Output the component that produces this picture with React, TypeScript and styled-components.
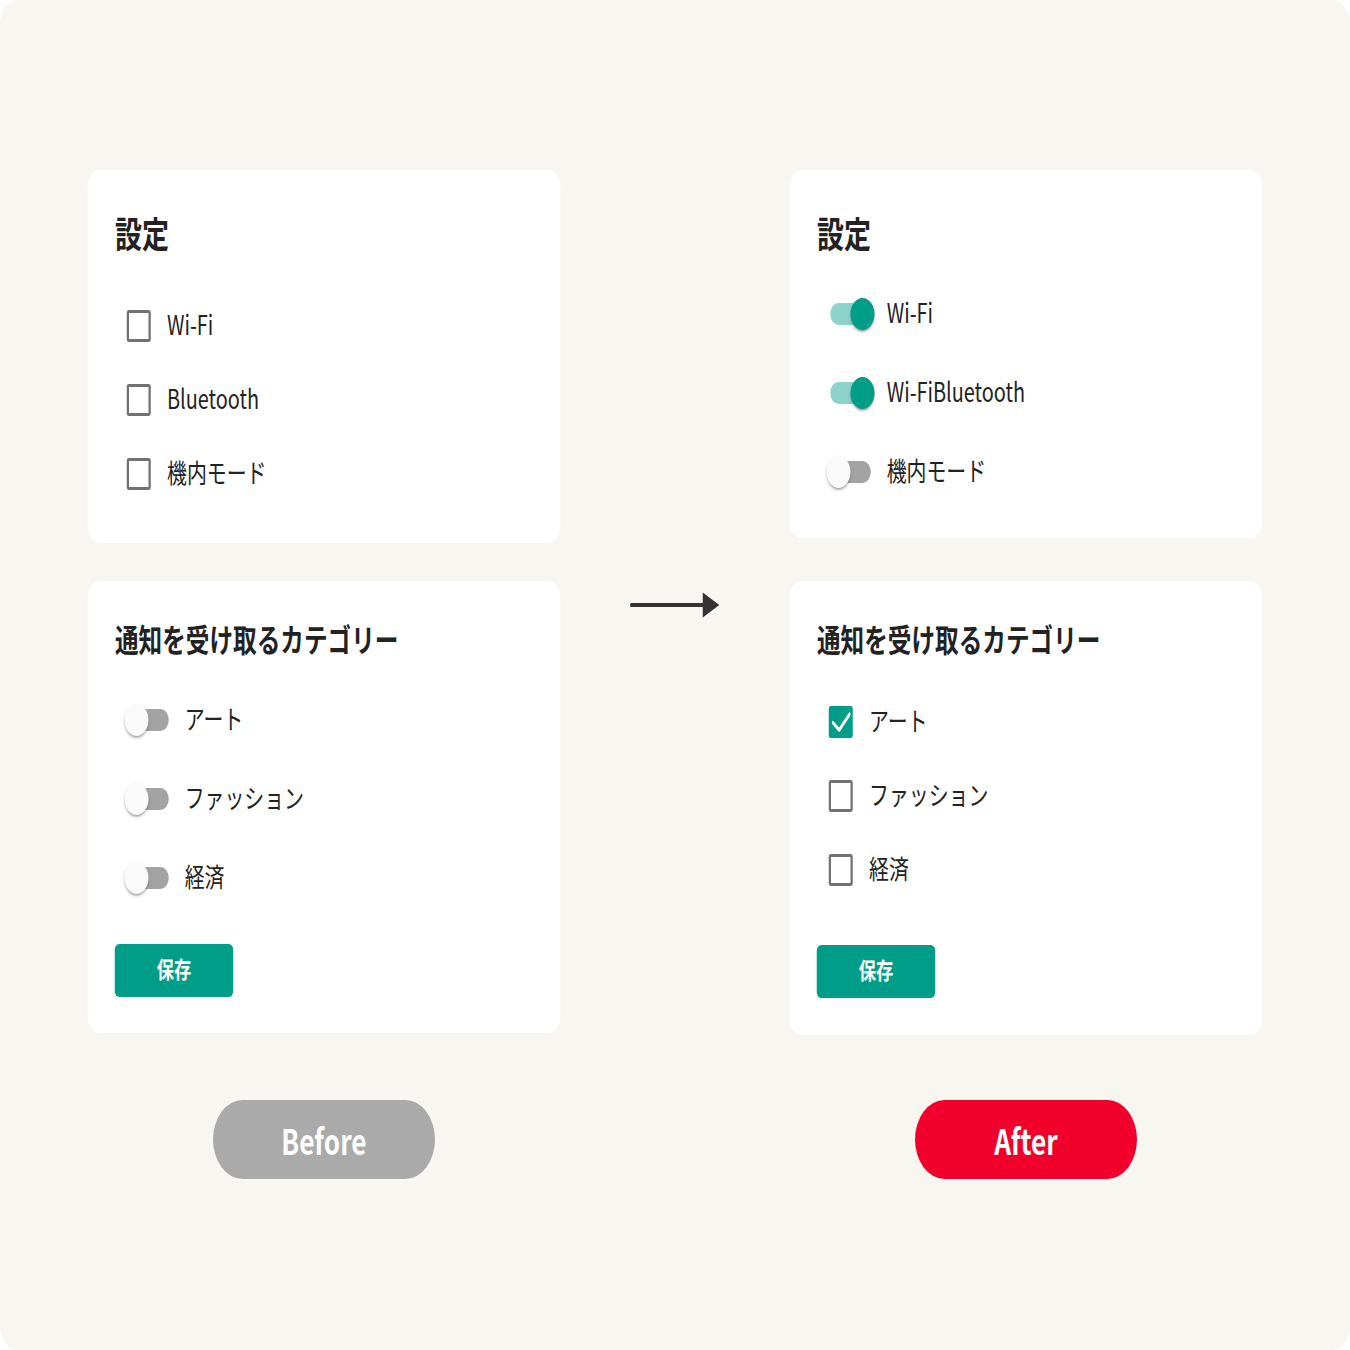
import React from "react";
import styled, { createGlobalStyle } from "styled-components";

const TEAL = "#009e88";

const GlobalStyle = createGlobalStyle`
  html, body {
    margin: 0;
    padding: 0;
    background: #ffffff;
    overflow: hidden;
  }
  body {
    font-family: "Noto Sans CJK JP", "Noto Sans", sans-serif;
    color: #222222;
  }
`;

// the shot is squeezed to 3/4 of its width, so lay out at 1800 wide and scale down
const Stage = styled.div`
  width: 1800px;
  height: 1350px;
  box-sizing: border-box;
  padding: 170px 0 0 117.3px;
  background: #f7f6f1;
  border-radius: 24px;
  transform: scaleX(0.75);
  transform-origin: 0 0;
`;

const Compare = styled.div`
  display: grid;
  grid-template-columns: 629.3px 306.7px 629.3px;
  row-gap: 65px;
`;

const Stack = styled.div<{ $gap: number }>`
  display: flex;
  flex-direction: column;
  gap: ${(p) => p.$gap}px;
`;

const Card = styled.section<{ $top: number; $bottom: number }>`
  background: #ffffff;
  border-radius: 16px;
  padding: ${(p) => p.$top}px 36px ${(p) => p.$bottom}px;
`;

const Heading = styled.h2<{ $size: number }>`
  margin: 0;
  font-size: ${(p) => p.$size}px;
  line-height: ${(p) => p.$size * 1.5}px;
  font-weight: 700;
  color: #222222;
`;

const List = styled.div<{ $top: number }>`
  display: flex;
  flex-direction: column;
  margin-top: ${(p) => p.$top}px;
`;

const Row = styled.label<{ $height: number }>`
  display: flex;
  align-items: center;
  height: ${(p) => p.$height}px;
`;

const Label = styled.span`
  padding-bottom: 4px;
  font-size: 26.5px;
  line-height: 1;
  color: #222222;
  white-space: nowrap;
`;

const Box = styled.span<{ $checked: boolean }>`
  display: flex;
  align-items: center;
  justify-content: center;
  box-sizing: border-box;
  width: 32px;
  height: 32px;
  margin: 0 21.4px 0 16px;
  flex-shrink: 0;
  border: 3.5px solid ${(p) => (p.$checked ? TEAL : "#727272")};
  border-radius: 3px;
  background: ${(p) => (p.$checked ? TEAL : "#ffffff")};
`;

const SwitchRoot = styled.span`
  position: relative;
  width: 64px;
  height: 34px;
  margin: 0 16px 0 13px;
  flex-shrink: 0;
`;

const Track = styled.span<{ $on: boolean }>`
  position: absolute;
  left: 5px;
  top: 6px;
  width: 54px;
  height: 22px;
  border-radius: 11px;
  background: ${(p) => (p.$on ? "rgba(0, 158, 136, 0.45)" : "#a3a3a3")};
`;

const Thumb = styled.span<{ $on: boolean }>`
  position: absolute;
  top: 1px;
  left: ${(p) => (p.$on ? 32 : 0)}px;
  width: 32px;
  height: 32px;
  border-radius: 50%;
  background: ${(p) => (p.$on ? TEAL : "#fafafa")};
  box-shadow: 0 3px 2px -2px rgba(0, 0, 0, 0.2), 0 2px 2px rgba(0, 0, 0, 0.14),
    0 2px 5px rgba(0, 0, 0, 0.12);
`;

const SaveButton = styled.button<{ $top: number }>`
  display: flex;
  align-items: center;
  justify-content: center;
  box-sizing: border-box;
  width: 157.3px;
  height: 53px;
  margin-top: ${(p) => p.$top}px;
  padding: 0 0 5px;
  border: none;
  border-radius: 6px;
  background: ${TEAL};
  color: #ffffff;
  font-family: inherit;
  font-size: 23px;
  font-weight: 700;
`;

const ArrowCell = styled.div`
  display: flex;
  align-items: center;
  justify-content: center;
  padding-top: 5px;
`;

const Pill = styled.div<{ $bg: string }>`
  justify-self: center;
  display: flex;
  align-items: center;
  justify-content: center;
  width: 296px;
  height: 79px;
  border-radius: 40px;
  background: ${(p) => p.$bg};
  color: #ffffff;
  font-size: 35px;
  font-weight: 700;
`;

type Item = { label: string; on: boolean };

const Checkbox = ({ checked }: { checked: boolean }) => (
  <Box $checked={checked}>
    {checked && (
      <svg width="25" height="25" viewBox="3.5 3.5 25 25">
        <path
          d="M5 16 L13.3 23.6 L27.4 7.6"
          fill="none"
          stroke="#ffffff"
          strokeWidth="3.4"
          strokeLinecap="round"
          strokeLinejoin="round"
        />
      </svg>
    )}
  </Box>
);

const Switch = ({ on }: { on: boolean }) => (
  <SwitchRoot>
    <Track $on={on} />
    <Thumb $on={on} />
  </SwitchRoot>
);

const Options = ({ kind, items, top }: { kind: "checkbox" | "switch"; items: Item[]; top: number }) => (
  <List $top={top}>
    {items.map((it, i) => (
      <Row key={i} $height={kind === "checkbox" ? 74 : 79}>
        {kind === "checkbox" ? <Checkbox checked={it.on} /> : <Switch on={it.on} />}
        <Label>{it.label}</Label>
      </Row>
    ))}
  </List>
);

const Arrow = () => (
  <svg width="119" height="26" viewBox="0 0 119 26">
    <line x1="2" y1="13" x2="100" y2="13" stroke="#333333" strokeWidth="4" strokeLinecap="round" />
    <polygon points="97,0.5 119,13 97,25.5" fill="#333333" />
  </svg>
);

const beforeSettings: Item[] = [
  { label: "Wi-Fi", on: false },
  { label: "Bluetooth", on: false },
  { label: "機内モード", on: false },
];

const afterSettings: Item[] = [
  { label: "Wi-Fi", on: true },
  { label: "Wi-FiBluetooth", on: true },
  { label: "機内モード", on: false },
];

const beforeCategories: Item[] = [
  { label: "アート", on: false },
  { label: "ファッション", on: false },
  { label: "経済", on: false },
];

const afterCategories: Item[] = [
  { label: "アート", on: true },
  { label: "ファッション", on: false },
  { label: "経済", on: false },
];

export default function App() {
  return (
    <>
      <GlobalStyle />
      <Stage>
        <Compare>
          <Stack $gap={38}>
            <Card $top={35} $bottom={32}>
              <Heading $size={36}>設定</Heading>
              <Options kind="checkbox" items={beforeSettings} top={30} />
            </Card>
            <Card $top={34} $bottom={36}>
              <Heading $size={31.5}>通知を受け取るカテゴリー</Heading>
              <Options kind="switch" items={beforeCategories} top={18.25} />
              <SaveButton $top={26.5}>保存</SaveButton>
            </Card>
          </Stack>

          <ArrowCell>
            <Arrow />
          </ArrowCell>

          <Stack $gap={43}>
            <Card $top={35} $bottom={26.5}>
              <Heading $size={36}>設定</Heading>
              <Options kind="switch" items={afterSettings} top={15.5} />
            </Card>
            <Card $top={34} $bottom={37}>
              <Heading $size={31.5}>通知を受け取るカテゴリー</Heading>
              <Options kind="checkbox" items={afterCategories} top={22.75} />
              <SaveButton $top={38}>保存</SaveButton>
            </Card>
          </Stack>

          <Pill $bg="#aaaaaa">Before</Pill>
          <div />
          <Pill $bg="#f0002b">After</Pill>
        </Compare>
      </Stage>
    </>
  );
}
